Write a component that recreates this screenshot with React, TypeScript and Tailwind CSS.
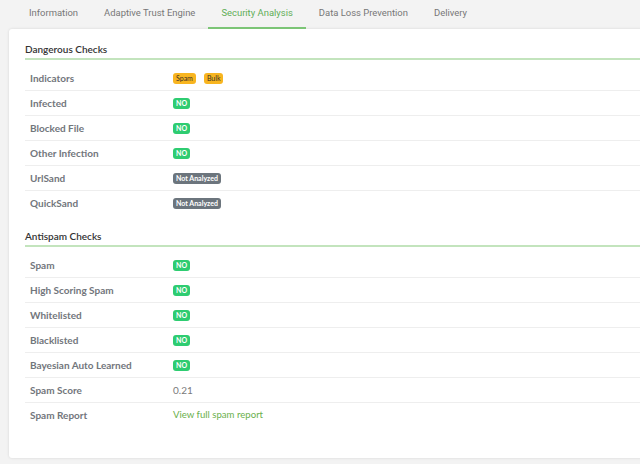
import React from "react";

type Badge = { text: string; tone: "warn" | "ok" | "none" };
type Row = { label: string; badges?: Badge[]; text?: string; link?: string };

const tabs = ["Information", "Adaptive Trust Engine", "Security Analysis", "Data Loss Prevention", "Delivery"];

const no: Badge[] = [{ text: "NO", tone: "ok" }];
const na: Badge[] = [{ text: "Not Analyzed", tone: "none" }];

const dangerous: Row[] = [
  { label: "Indicators", badges: [{ text: "Spam", tone: "warn" }, { text: "Bulk", tone: "warn" }] },
  { label: "Infected", badges: no },
  { label: "Blocked File", badges: no },
  { label: "Other Infection", badges: no },
  { label: "UrlSand", badges: na },
  { label: "QuickSand", badges: na },
];

const antispam: Row[] = [
  { label: "Spam", badges: no },
  { label: "High Scoring Spam", badges: no },
  { label: "Whitelisted", badges: no },
  { label: "Blacklisted", badges: no },
  { label: "Bayesian Auto Learned", badges: no },
  { label: "Spam Score", text: "0.21" },
  { label: "Spam Report", link: "View full spam report" },
];

function Pill({ b }: { b: Badge }) {
  const tone =
    b.tone === "warn"
      ? "bg-[#f8b520] text-[#3a3020] font-normal"
      : b.tone === "ok"
        ? "bg-[#2ecc71] text-white font-bold"
        : "bg-[#6c757d] text-white font-bold";
  return (
    <span className={`inline-flex h-[11px] items-center rounded-[3px] px-[3px] text-[7px] leading-none ${tone}`}>
      {b.text}
    </span>
  );
}

function Section({ title, rows, first }: { title: string; rows: Row[]; first?: boolean }) {
  return (
    <section className={first ? "" : "mt-3"}>
      <h2 className="border-b-2 border-[#c3e4bd] pb-px text-[10px] leading-4 font-semibold text-[#333]">{title}</h2>
      <div className="mt-1.5">
        {rows.map((r, i) => (
          <div
            key={r.label}
            className={`flex h-[25px] items-center ${i < rows.length - 1 ? "border-b border-[#eeeeee]" : ""}`}
          >
            <div className="w-[148px] pl-[5px] text-[10px] font-bold text-[#72767c]">{r.label}</div>
            <div className="flex items-center gap-[8px] text-[9.6px]">
              {r.badges?.map((b) => <Pill key={b.text} b={b} />)}
              {r.text && <span className="text-[10px] text-[#7a7a7a]">{r.text}</span>}
              {r.link && <a className="text-[#6ab04c]">{r.link}</a>}
            </div>
          </div>
        ))}
      </div>
    </section>
  );
}

export default function App() {
  return (
    <div className="h-[464px] w-[640px] overflow-hidden bg-[#f3f3f3] font-['Lato',sans-serif]">
      <nav className="flex h-[29px] pl-[16px] font-['Roboto',sans-serif] text-[9.45px]">
        {tabs.map((t) => (
          <div
            key={t}
            className={`flex shrink-0 items-center border-b-2 px-[13px] ${
              t === "Security Analysis" ? "border-[#7cc576] text-[#5fae57]" : "border-transparent text-[#777]"
            }`}
          >
            {t}
          </div>
        ))}
      </nav>
      <main className="ml-[9px] mr-[-30px] h-[429px] rounded-[3px] bg-white pt-3 pr-4 pl-4 shadow-[0_0_3px_rgba(0,0,0,0.12)]">
        <Section title="Dangerous Checks" rows={dangerous} first />
        <Section title="Antispam Checks" rows={antispam} />
      </main>
    </div>
  );
}
